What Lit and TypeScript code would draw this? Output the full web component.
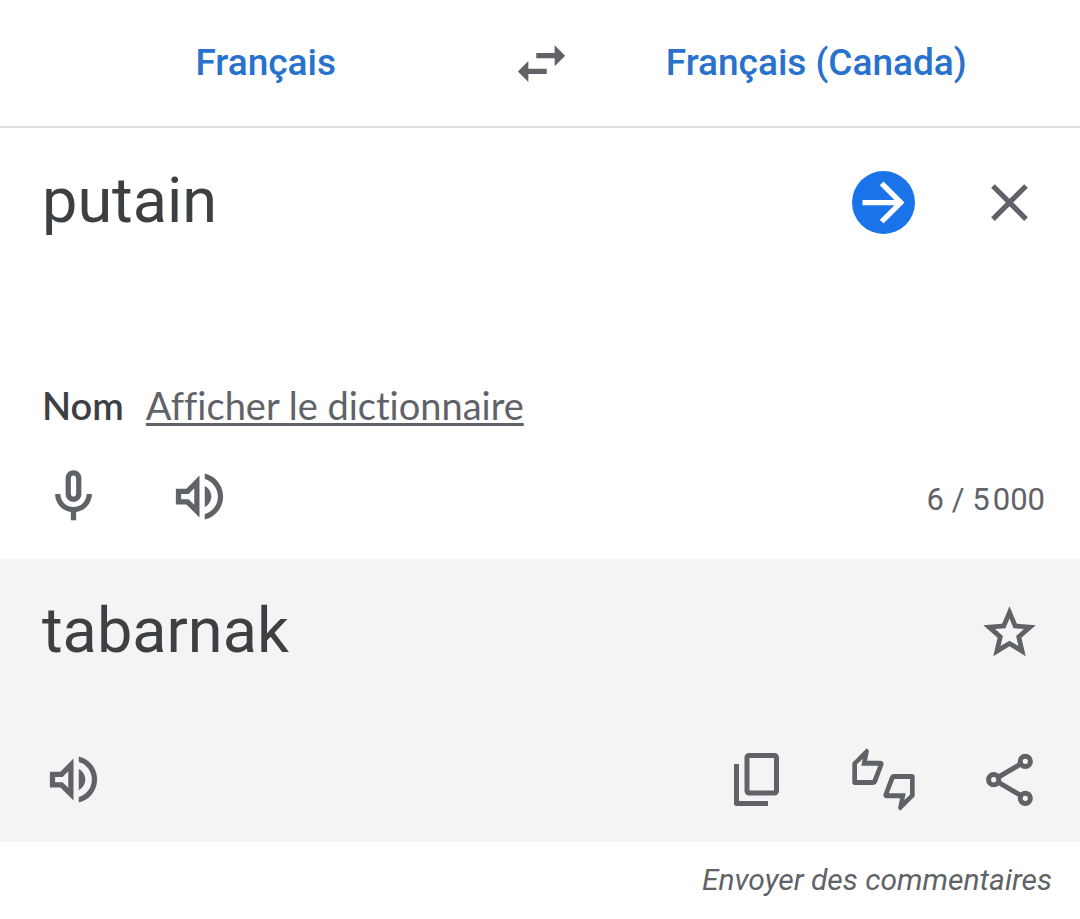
import { LitElement, html, css, svg } from "lit";
import { customElement, state } from "lit/decorators.js";

const swapIcon = svg`<path d="M6.99 11 3 15l3.99 4v-3H14v-2H6.99v-3zM21 9l-3.99-4v3H10v2h7.01v3L21 9z"/>`;
const arrowIcon = svg`<path d="m12 4-1.41 1.41L16.17 11H4v2h12.17l-5.58 5.59L12 20l8-8z"/>`;
const closeIcon = svg`<path d="M19 6.41 17.59 5 12 10.59 6.41 5 5 6.41 10.59 12 5 17.59 6.41 19 12 13.41 17.59 19 19 17.59 13.41 12z"/>`;
const micIcon = svg`<path d="M12 14c1.66 0 3-1.34 3-3V5c0-1.66-1.34-3-3-3S9 3.34 9 5v6c0 1.66 1.34 3 3 3zm-1-9c0-.55.45-1 1-1s1 .45 1 1v6c0 .55-.45 1-1 1s-1-.45-1-1V5zm6 6c0 2.76-2.24 5-5 5s-5-2.24-5-5H5c0 3.53 2.61 6.43 6 6.92V21h2v-3.08c3.39-.49 6-3.39 6-6.92h-2z"/>`;
const speakerIcon = svg`<path d="M3 9v6h4l5 5V4L7 9H3zm7-.17v6.34L7.83 13H5v-2h2.83L10 8.83zM16.5 12c0-1.77-1.02-3.29-2.5-4.03v8.05c1.48-.73 2.5-2.25 2.5-4.02zM14 3.23v2.06c2.89.86 5 3.54 5 6.71s-2.11 5.85-5 6.71v2.06c4.01-.91 7-4.49 7-8.77s-2.99-7.86-7-8.77z"/>`;
const starIcon = svg`<path d="m22 9.24-7.19-.62L12 2 9.19 8.63 2 9.24l5.46 4.73L5.82 21 12 17.27 18.18 21l-1.63-7.03L22 9.24zM12 15.1l-3.4 2.05.9-3.86-3-2.6 3.96-.34L12 6.7l1.54 3.65 3.96.34-3 2.6.9 3.86L12 15.1z"/>`;

const copyIcon = svg`<g fill="none" stroke="currentColor" stroke-width="5" stroke-linejoin="round">
  <rect x="21" y="7.5" width="29.5" height="37.5" rx="2"/>
  <path d="M10.5 16v39.5H42"/></g>`;
const thumb = "M14.7.3 17 2.7 15 12.7H28.2Q31.8 12.9 31.6 16.5L25 34.2Q24 37 21.3 37H3.2Q.3 37 .3 34.2V14.7Zm-4 10.7L5 16.2V32H20.6L26.2 17.7H9.3Z";
const rateIcon = svg`<g fill-rule="evenodd"><path d=${thumb}/><path d=${thumb} transform="rotate(180 31.5 31.5)"/></g>`;
const shareIcon = svg`<g fill="none" stroke="currentColor" stroke-width="5">
  <circle cx="15.7" cy="31.7" r="5.1"/><circle cx="47.3" cy="13.3" r="5.1"/><circle cx="47.3" cy="50.3" r="5.1"/>
  <path d="m20.5 29 22.2-13M20.5 34.4l22.2 13"/></g>`;

const icon = (shape: unknown, size = 24) =>
  html`<svg viewBox="0 0 ${size} ${size}" aria-hidden="true">${shape}</svg>`;

@customElement("app-root")
export class AppRoot extends LitElement {
  @state() private text = "putain";

  static styles = css`
    :host {
      display: block;
      background: #fff;
      color: #3c4043;
      font-family: Roboto, sans-serif;
    }
    button, textarea {
      margin: 0;
      padding: 0;
      border: 0;
      background: none;
      color: inherit;
      font: inherit;
    }
    button { cursor: pointer; }
    .languages {
      display: grid;
      grid-template-columns: 1fr auto 1fr;
      align-items: center;
      height: 126px;
      padding: 0 20px 0 22px;
      border-bottom: 2px solid #dfdfdf;
    }
    .language {
      color: #2871cc;
      font-size: 37px;
      font-weight: 500;
      line-height: 44px;
    }
    .icon {
      display: block;
      flex: none;
      width: 63px;
      height: 63px;
      color: #5f6368;
    }
    .icon svg {
      display: block;
      width: 100%;
      height: 100%;
      fill: currentColor;
    }
    .go {
      border-radius: 50%;
      background: #1a73e8;
      color: #fff;
    }
    .panel { padding: 36px 35px 31px 42px; }
    .result {
      padding-top: 35px;
      background: #f4f4f4;
    }
    .entry, .result .tools { padding-right: 4px; }
    .entry {
      display: flex;
      align-items: flex-start;
      gap: 63px;
    }
    .entry .icon { margin-top: 7px; }
    .phrase {
      display: block;
      flex: 1;
      min-width: 0;
      margin: 0;
      font-size: 63px;
      line-height: 74px;
    }
    textarea.phrase {
      outline: 0;
      resize: none;
      overflow: hidden;
    }
    .dictionary {
      display: flex;
      align-items: baseline;
      gap: 22px;
      font-family: Lato, sans-serif;
      font-size: 38px;
      font-variant-ligatures: none;
      line-height: 39px;
    }
    .word-class { font-weight: 600; }
    .dictionary a {
      color: #5f6368;
      text-decoration-thickness: 3px;
      text-underline-offset: 3px;
      text-decoration-skip-ink: none;
    }
    .tools {
      display: flex;
      align-items: center;
      gap: 63px;
      margin-top: 40px;
    }
    .result .tools { margin-top: 80px; }
    .push { margin-left: auto; }
    .count {
      padding-top: 6px;
      color: #5f6368;
      font-size: 31px;
    }
    .feedback {
      display: flex;
      justify-content: flex-end;
      padding: 18px 28px;
      font-size: 30px;
      font-style: italic;
      line-height: 40px;
    }
    .feedback a {
      color: #5f6368;
      text-decoration: none;
    }
  `;

  private onInput(e: Event) {
    this.text = (e.target as HTMLTextAreaElement).value;
  }

  render() {
    return html`
      <header class="languages">
        <button class="language">Français</button>
        <button class="icon" aria-label="Inverser les langues">${icon(swapIcon)}</button>
        <button class="language">Français (Canada)</button>
      </header>
      <section class="panel">
        <div class="entry">
          <textarea class="phrase" rows="3" aria-label="Texte source" spellcheck="false"
            maxlength="5000" .value=${this.text} @input=${this.onInput}></textarea>
          <button class="icon go" aria-label="Traduire">${icon(arrowIcon)}</button>
          <button class="icon" aria-label="Effacer" @click=${() => (this.text = "")}>${icon(closeIcon)}</button>
        </div>
        <div class="dictionary">
          <span class="word-class">Nom</span>
          <a href="#dictionnaire">Afficher le dictionnaire</a>
        </div>
        <div class="tools">
          <button class="icon" aria-label="Saisie vocale">${icon(micIcon)}</button>
          <button class="icon" aria-label="Écouter le texte source">${icon(speakerIcon)}</button>
          <span class="count push">${this.text.length} / 5\u200a000</span>
        </div>
      </section>
      <section class="panel result">
        <div class="entry">
          <p class="phrase">tabarnak</p>
          <button class="icon" aria-label="Enregistrer">${icon(starIcon)}</button>
        </div>
        <div class="tools">
          <button class="icon" aria-label="Écouter la traduction">${icon(speakerIcon)}</button>
          <button class="icon push" aria-label="Copier">${icon(copyIcon, 63)}</button>
          <button class="icon" aria-label="Évaluer">${icon(rateIcon, 63)}</button>
          <button class="icon" aria-label="Partager">${icon(shareIcon, 63)}</button>
        </div>
      </section>
      <footer class="feedback"><a href="#commentaires">Envoyer des commentaires</a></footer>
    `;
  }
}
